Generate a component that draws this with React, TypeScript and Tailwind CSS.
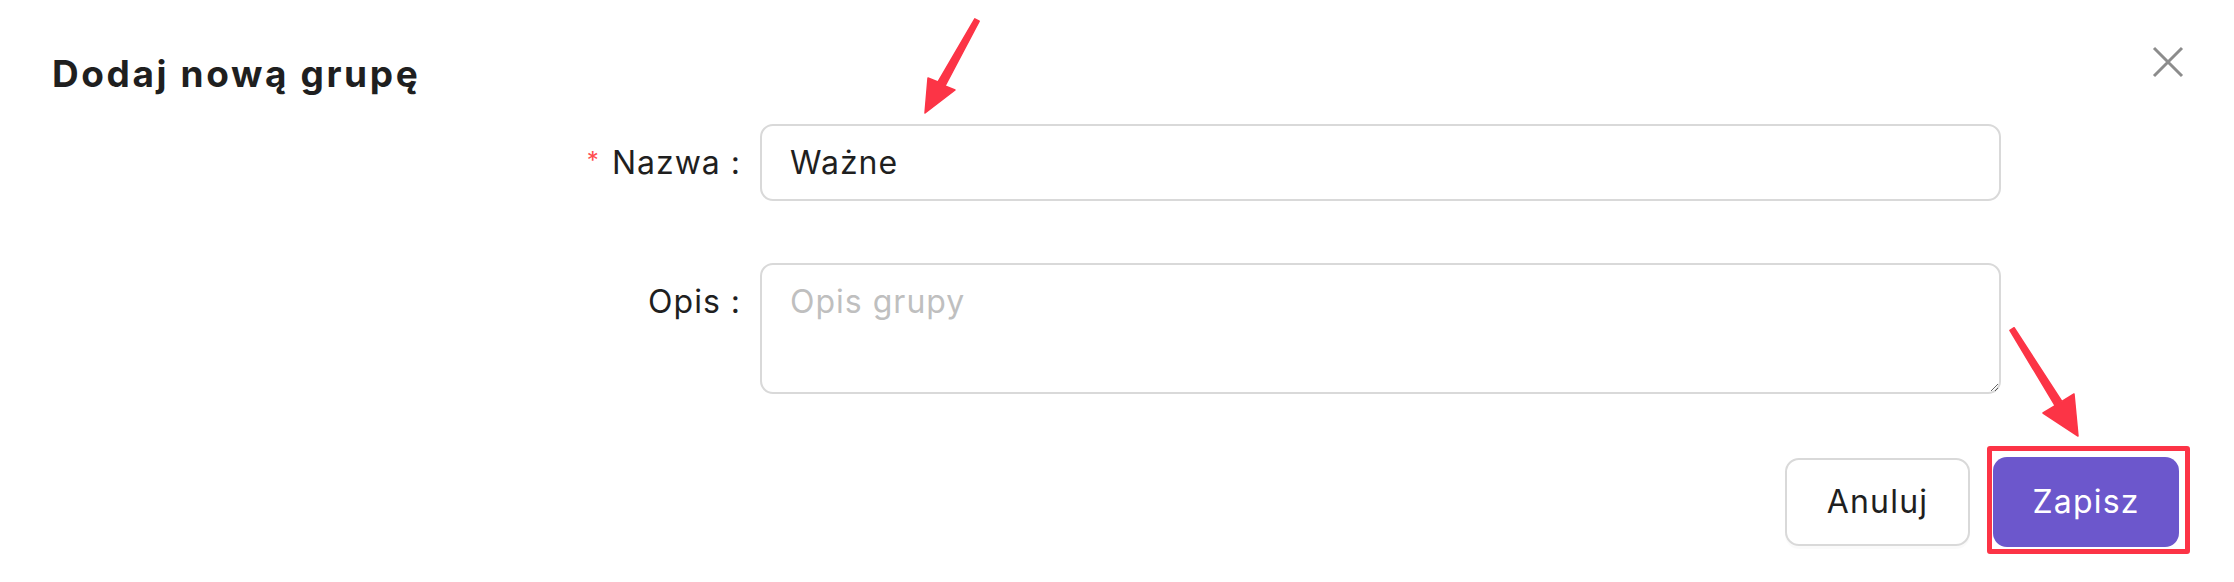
import React from 'react';

const font = { fontFamily: 'Inter, "Noto Sans", sans-serif' };

const Arrows = () => (
  <svg
    className="absolute left-0 top-0 pointer-events-none"
    width={2234}
    height={582}
    viewBox="0 0 2234 582"
  >
    <g fill="#fc3446" stroke="#fc3446" strokeWidth={1.5} strokeLinejoin="round">
      <polygon points="974.8,18.8 979.2,21.2 945,86 955,90 925,113 928,78 938,82" />
      <polygon points="2009.9,330.3 2014.1,327.7 2061.9,401.4 2074,394 2078,436 2043,413 2055.1,405.6" />
    </g>
  </svg>
);

export default function App() {
  return (
    <div
      className="relative w-[2234px] h-[582px] bg-white overflow-hidden text-[#1f1f1f] tracking-[1px]"
      style={font}
    >
      <div className="flex items-start justify-between px-[50px] pt-[46px]">
        <h2 className="ml-[2px] mt-[6px] text-[37px] leading-[44px] font-bold tracking-[2.6px] text-[#1f1f1f]">
          Dodaj nową grupę
        </h2>
        <button className="w-[32px] h-[32px] flex items-center justify-center">
          <svg width={32} height={32} viewBox="0 0 32 32">
            <path d="M2 2 L30 30 M30 2 L2 30" stroke="#8c8c8c" strokeWidth={3} />
          </svg>
        </button>
      </div>

      <form className="mt-[28px]">
        <div className="flex items-center">
          <label className="w-[760px] shrink-0 flex items-center justify-end pr-[19px] text-[32px] leading-[44px]">
            <span className="text-[#ff4d4f] text-[24px] leading-none self-start mt-[8px] mr-[12px]">*</span>
            <span>Nazwa</span>
            <span className="ml-[10px]">:</span>
          </label>
          <input
            defaultValue="Ważne"
            className="w-[1241px] h-[77px] border-2 border-[#d9d9d9] rounded-[13px] pl-[28px] text-[32px] leading-[44px] tracking-[1px] outline-none"
          />
        </div>

        <div className="flex items-start mt-[62px]">
          <label className="w-[760px] shrink-0 flex justify-end pr-[19px] mt-[17px] text-[32px] leading-[44px]">
            <span>Opis</span>
            <span className="ml-[10px]">:</span>
          </label>
          <textarea
            placeholder="Opis grupy"
            className="w-[1241px] h-[131px] border-2 border-[#d9d9d9] rounded-[13px] pl-[28px] pt-[15px] text-[32px] leading-[44px] tracking-[1px] outline-none placeholder:text-[#bfbfbf]"
          />
        </div>

        <div className="flex justify-end items-center gap-[23px] pr-[55px] mt-[63px]">
          <button
            type="button"
            className="w-[185px] h-[88px] border-2 border-[#d9d9d9] rounded-[14px] bg-white text-[32px] tracking-[1.2px] shadow-[0_3px_0_rgba(0,0,0,0.02)]"
          >
            Anuluj
          </button>
          <div className="relative">
            <button
              type="button"
              className="w-[186px] h-[90px] rounded-[14px] bg-[#6c57cc] text-white text-[32px] tracking-[1.2px]"
            >
              Zapisz
            </button>
            <span className="absolute left-[-6px] top-[-11px] right-[-11px] bottom-[-7px] border-[5px] border-[#fc3446] rounded-[3px] pointer-events-none" />
          </div>
        </div>
      </form>

      <Arrows />
    </div>
  );
}
